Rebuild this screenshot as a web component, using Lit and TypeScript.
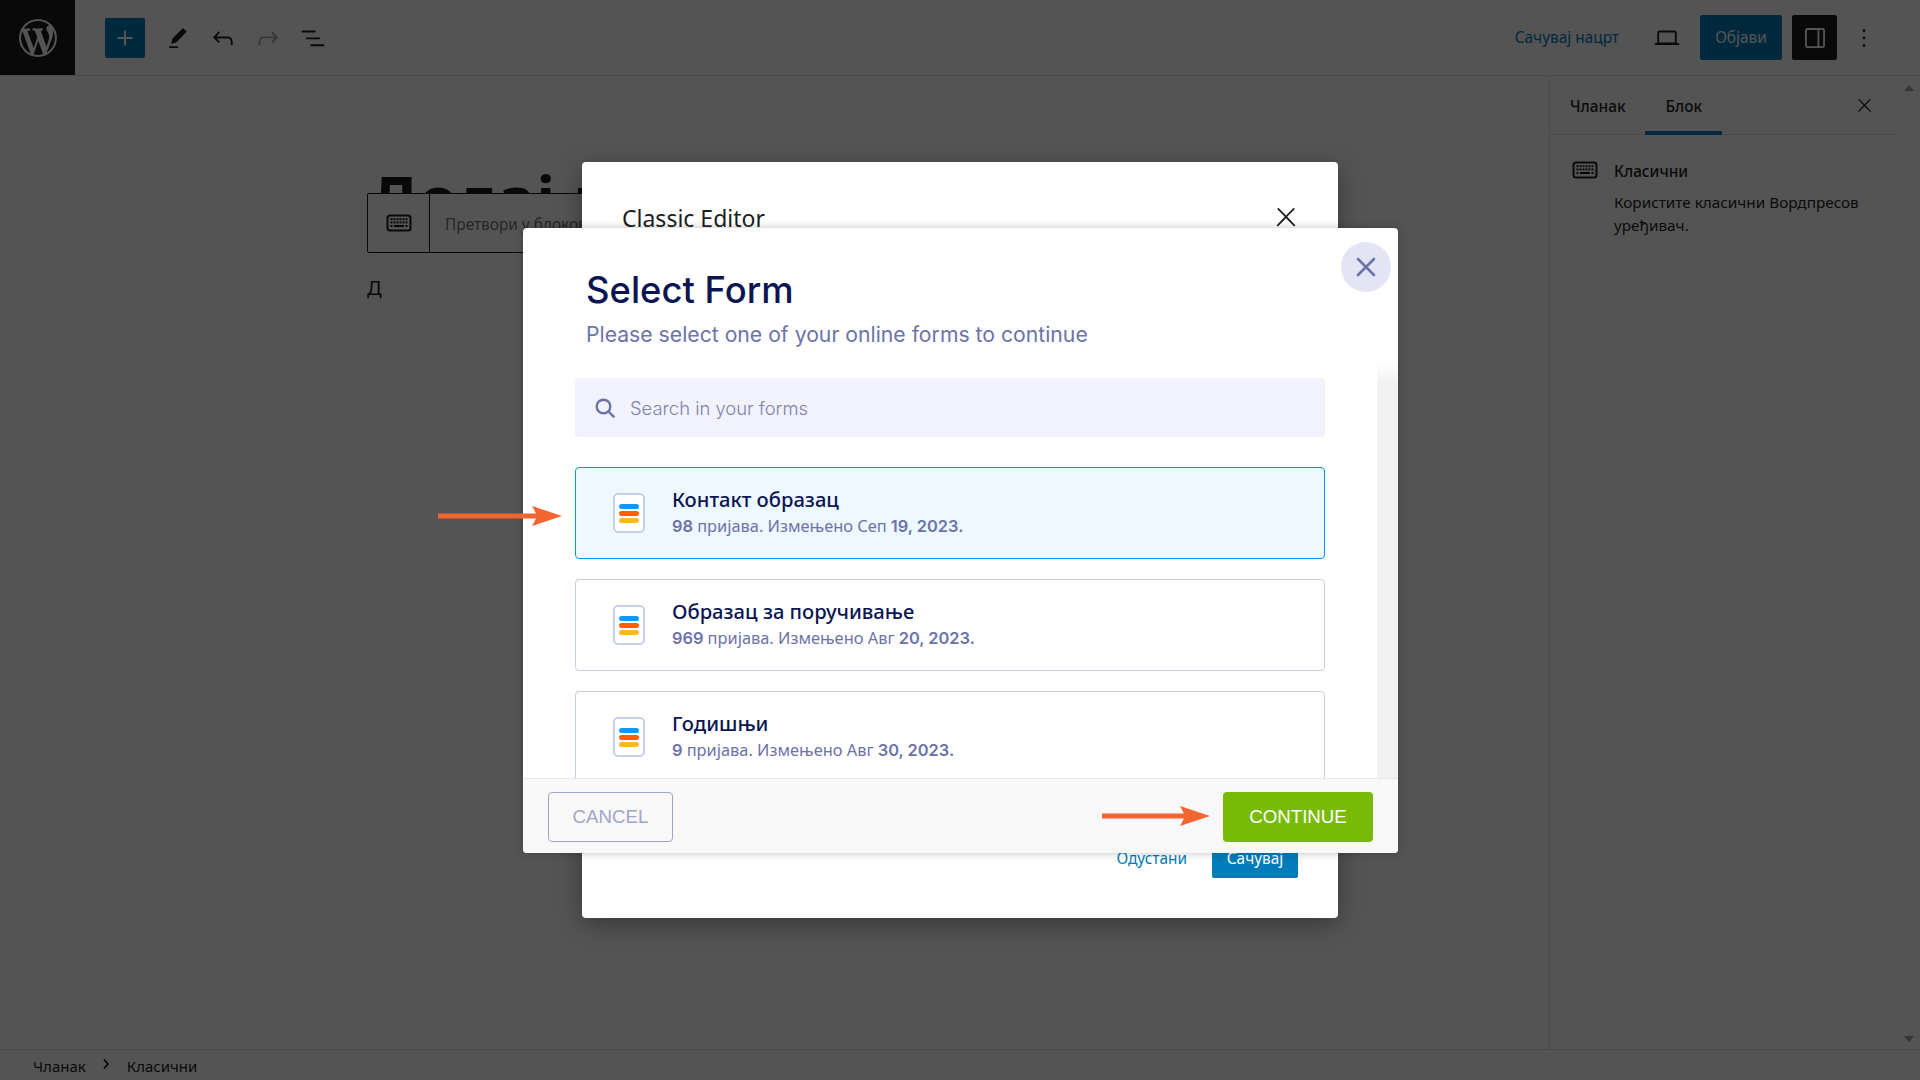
import { LitElement, html, css, svg } from 'lit';
import { customElement } from 'lit/decorators.js';

const icon = (d: string, size = 30) => html`
  <svg width=${size} height=${size} viewBox="0 0 24 24" fill="currentColor">${svg`<path d=${d}></path>`}</svg>
`;

const wpLogo =
  'M20 10c0-5.51-4.49-10-10-10C4.48 0 0 4.49 0 10c0 5.52 4.48 10 10 10 5.51 0 10-4.48 10-10zM7.78 15.37L4.37 6.22c.55-.02 1.17-.08 1.17-.08.5-.06.44-1.13-.06-1.11 0 0-1.45.11-2.37.11-.18 0-.37 0-.58-.01C4.12 2.69 6.87 1.11 10 1.11c2.33 0 4.45.87 6.05 2.34-.68-.11-1.65.39-1.65 1.58 0 .74.45 1.36.9 2.1.35.61.55 1.36.55 2.46 0 1.49-1.4 5-1.4 5l-3.03-8.37c.54-.02.82-.17.82-.17.5-.05.44-1.25-.06-1.22 0 0-1.44.12-2.38.12-.87 0-2.33-.12-2.33-.12-.5-.03-.56 1.2-.06 1.22l.92.08 1.26 3.41zM17.41 10c.24-.64.74-1.87.43-4.25.7 1.29 1.05 2.71 1.05 4.25 0 3.29-1.73 6.24-4.4 7.78.97-2.59 1.94-5.2 2.92-7.78zM6.1 18.09C3.12 16.65 1.11 13.53 1.11 10c0-1.3.23-2.48.72-3.59C3.25 10.3 4.67 14.2 6.1 18.09zm4.03-6.63l2.58 6.98c-.86.29-1.76.45-2.71.45-.79 0-1.57-.11-2.29-.33.81-2.38 1.62-4.74 2.42-7.1z';
const plus = 'M18 11.2h-5.2V6h-1.6v5.2H6v1.6h5.2V18h1.6v-5.2H18z';
const pencil = 'm19 7-3-3-8.5 8.5-1 4 4-1L19 7Zm-7 11.5H5V20h7v-1.5Z';
const undo = 'M18.3 11.7c-.6-.6-1.4-.9-2.3-.9H6.7l2.9-3.3-1.1-1-4.5 5L8.5 16l1-1-2.7-2.7H16c.5 0 .9.2 1.3.5 1 1 1 3.4 1 4.5v.3h1.5v-.2c0-1.5 0-4.3-1.5-5.7z';
const redo = 'M15.6 6.5l-1.1 1 2.9 3.3H8c-.9 0-1.7.3-2.3.9-1.4 1.5-1.4 4.2-1.4 5.6v.2h1.5v-.3c0-1.1 0-3.5 1-4.5.3-.3.7-.5 1.3-.5h9.2L14.5 15l1.1 1.1 4.6-4.6-4.6-5z';
const listView = 'M3 6h11v1.5H3V6zm3.5 5.5h11V13h-11v-1.5zM21 17H10v1.5h11V17z';
const laptop = 'M20.5 16h-.7V8c0-1.1-.9-2-2-2H6.2c-1.1 0-2 .9-2 2v8h-.7c-.8 0-1.5.7-1.5 1.5h20c0-.8-.7-1.5-1.5-1.5zM5.7 8c0-.3.2-.5.5-.5h11.6c.3 0 .5.2.5.5v7.6H5.7V8z';
const sidebarIcon = 'M18 4H6c-1.1 0-2 .9-2 2v12c0 1.1.9 2 2 2h12c1.1 0 2-.9 2-2V6c0-1.1-.9-2-2-2zm-4 14.5H6c-.3 0-.5-.2-.5-.5V6c0-.3.2-.5.5-.5h8v13zm4.5-.5c0 .3-.2.5-.5.5h-2.5v-13H18c.3 0 .5.2.5.5v12z';
const kebab = 'M13 19h-2v-2h2v2zm0-6h-2v-2h2v2zm0-6h-2V5h2v2z';
const closeIcon = 'M13 11.8l6.1-6.3-1-1-6.1 6.2-6.1-6.2-1 1 6.1 6.3-6.5 6.7 1 1 6.5-6.6 6.5 6.6 1-1z';
const chevron = 'M10.4 6 8.8 7.2l4.2 4.8-4.2 4.8 1.6 1.2 5.3-6z';

// six keys, six keys, then key + space bar + key
const keyboardIcon = html`
  <svg width="30" height="30" viewBox="0 0 30 30" fill="currentColor">
    <rect x="3.5" y="7.5" width="23" height="15" rx="2.5" fill="none" stroke="currentColor" stroke-width="2"></rect>
    ${[6.5, 9.5, 12.5, 15.5, 18.5, 21.5].map(
      (x) => svg`<rect x=${x} y="10.2" width="2" height="2"></rect><rect x=${x} y="13.4" width="2" height="2"></rect>`
    )}
    <rect x="6.5" y="17" width="2" height="2"></rect>
    <rect x="10" y="17" width="10" height="2"></rect>
    <rect x="21.5" y="17" width="2" height="2"></rect>
  </svg>
`;

const forms = [
  { name: 'Контакт образац', count: '98', month: 'Сеп', date: '19, 2023.', active: true },
  { name: 'Образац за поручивање', count: '969', month: 'Авг', date: '20, 2023.', active: false },
  { name: 'Годишњи', count: '9', month: 'Авг', date: '30, 2023.', active: false },
];

@customElement('app-root')
export class AppRoot extends LitElement {
  static styles = css`
    :host {
      display: block;
      position: relative;
      width: 1920px;
      height: 1080px;
      overflow: hidden;
      background: #fff;
      color: #1e1e1e;
      font-family: 'Noto Sans', sans-serif;
      font-size: 15.4px;
    }
    svg {
      display: block;
      flex: none;
    }

    /* editor behind the overlay */
    .editor {
      height: 100%;
      display: flex;
      flex-direction: column;
    }
    .topbar {
      height: 76px;
      flex: none;
      box-sizing: border-box;
      border-bottom: 1px solid #e0e0e0;
      display: flex;
      align-items: center;
    }
    .wp {
      width: 75px;
      height: 75px;
      background: #1e1e1e;
      color: #fff;
      display: flex;
      align-items: center;
      justify-content: center;
      flex: none;
    }
    .tools {
      display: flex;
      align-items: center;
      margin-left: 30px;
      gap: 15px;
    }
    .add {
      width: 40px;
      height: 40px;
      border-radius: 2px;
      background: #007cba;
      color: #fff;
      display: flex;
      align-items: center;
      justify-content: center;
      margin-right: 3px;
    }
    .muted {
      color: #a7a7a7;
    }
    .actions {
      margin-left: auto;
      display: flex;
      align-items: center;
      padding-right: 41px;
    }
    .save {
      color: #007cba;
      margin-right: 33px;
    }
    .publish {
      width: 82px;
      height: 45px;
      margin: 0 10px 0 18px;
      border-radius: 2px;
      background: #007cba;
      color: #fff;
      display: flex;
      align-items: center;
      justify-content: center;
    }
    .panel-btn {
      width: 45px;
      height: 45px;
      border-radius: 2px;
      background: #1e1e1e;
      color: #fff;
      display: flex;
      align-items: center;
      justify-content: center;
      margin-right: 12px;
    }
    .body {
      flex: 1;
      display: flex;
      min-height: 0;
    }
    .canvas {
      flex: 1;
      padding: 80px 0 0 367px;
      position: relative;
    }
    .heading {
      font-size: 62px;
      font-weight: 700;
      line-height: 84px;
      letter-spacing: 1px;
      margin-left: 3px;
      white-space: nowrap;
    }
    .block-toolbar {
      position: absolute;
      left: 367px;
      top: 117px;
      height: 60px;
      width: 300px;
      box-sizing: border-box;
      background: #fff;
      border: 1px solid #1e1e1e;
      border-radius: 2px;
      display: flex;
      align-items: center;
    }
    .block-toolbar .type {
      width: 62px;
      height: 100%;
      box-sizing: border-box;
      border-right: 1px solid #1e1e1e;
      display: flex;
      align-items: center;
      justify-content: center;
    }
    .block-toolbar .convert {
      padding: 3px 0 0 15px;
      white-space: nowrap;
      color: #757575;
    }
    .para {
      margin-top: 36px;
      font-size: 20px;
      line-height: 24px;
    }
    .sidebar {
      width: 350px;
      flex: none;
      box-sizing: border-box;
      border-left: 1px solid #e0e0e0;
    }
    .tabs {
      height: 59px;
      box-sizing: border-box;
      border-bottom: 1px solid #e0e0e0;
      display: flex;
      align-items: stretch;
      position: relative;
    }
    .tab {
      padding: 2px 20px 0;
      display: flex;
      align-items: center;
      font-weight: 500;
      margin-bottom: -1px;
    }
    .tab.on {
      box-shadow: inset 0 -4px 0 #007cba;
    }
    .tabs .x {
      margin-left: auto;
      margin-right: 24px;
      align-self: center;
    }
    .block-card {
      display: flex;
      gap: 14px;
      padding: 25px 20px 0 20px;
    }
    .block-card strong {
      display: block;
      font-weight: 500;
      line-height: 24px;
      margin-bottom: 7px;
    }
    .block-card p {
      margin: 0;
      line-height: 23px;
      font-size: 15.3px;
    }
    .block-card > svg {
      margin-top: -5px;
    }
    .rail {
      width: 21px;
      flex: none;
      position: relative;
    }
    .rail::before,
    .rail::after {
      content: '';
      position: absolute;
      left: 5px;
      border-left: 5px solid transparent;
      border-right: 5px solid transparent;
    }
    .rail::before {
      top: 9px;
      border-bottom: 6px solid #a3a3a3;
    }
    .rail::after {
      bottom: 7px;
      border-top: 6px solid #a3a3a3;
    }
    .crumbs {
      height: 31px;
      flex: none;
      box-sizing: border-box;
      border-top: 1px solid #e0e0e0;
      display: flex;
      align-items: center;
      padding: 2px 0 0 33px;
      font-size: 15px;
    }
    .crumbs svg {
      margin: -4px 11px 0 10px;
    }

    .overlay {
      position: absolute;
      inset: 0;
      background: rgba(0, 0, 0, 0.67);
    }

    /* Classic Editor modal */
    .classic {
      position: absolute;
      left: 582px;
      top: 162px;
      width: 756px;
      height: 756px;
      box-sizing: border-box;
      padding: 40px;
      background: #fff;
      border-radius: 4px;
      box-shadow: 0 6px 24px rgba(0, 0, 0, 0.35);
      display: flex;
      flex-direction: column;
    }
    .classic-head {
      display: flex;
      align-items: center;
      justify-content: space-between;
      color: #1e1e1e;
    }
    .classic-head h2 {
      margin: 0;
      font-size: 23px;
      font-weight: 400;
      line-height: 32px;
    }
    .classic-head svg {
      margin: -2px -3px 0 0;
    }
    .classic-foot {
      margin-top: auto;
      display: flex;
      justify-content: flex-end;
      align-items: center;
      gap: 25px;
    }
    .classic-foot .cancel-link {
      color: #007cba;
    }
    .classic-foot .save-btn {
      width: 86px;
      height: 40px;
      border-radius: 2px;
      background: #007cba;
      color: #fff;
      display: flex;
      align-items: center;
      justify-content: center;
    }

    /* Select Form modal */
    .picker {
      position: absolute;
      left: 523px;
      top: 228px;
      width: 875px;
      height: 625px;
      isolation: isolate;
      background: #fff;
      border-radius: 4px;
      box-shadow: 0 0 8px rgba(0, 0, 0, 0.25);
      display: flex;
      flex-direction: column;
      overflow: hidden;
      font-family: Inter, sans-serif;
    }
    .picker-head {
      height: 135px;
      flex: none;
      box-sizing: border-box;
      padding: 40px 62px 0 63px;
    }
    .picker-head h1 {
      margin: 0;
      font-size: 36.4px;
      line-height: 44px;
      font-weight: 500;
      color: #0a1551;
    }
    .picker-head p {
      margin: 6px 0 0;
      font-size: 21.2px;
      line-height: 32px;
      color: #6c73a8;
    }
    .round-close {
      position: absolute;
      right: 7px;
      top: 14px;
      width: 50px;
      height: 50px;
      border-radius: 50%;
      background: #e3e5f5;
      color: #6c73a8;
      display: flex;
      align-items: center;
      justify-content: center;
    }
    .picker-body {
      flex: 1;
      min-height: 0;
      display: flex;
      position: relative;
    }
    .picker-body::before {
      content: '';
      position: absolute;
      left: 0;
      right: 0;
      top: 0;
      height: 22px;
      background: linear-gradient(#fff, rgba(255, 255, 255, 0));
      z-index: 1;
    }
    .list {
      flex: 1;
      overflow: hidden;
      padding: 15px 52px 0 52px;
    }
    .track {
      width: 21px;
      flex: none;
      background: #f1f1f1;
    }
    .search {
      height: 59px;
      border-radius: 4px;
      background: #f1f2fc;
      display: flex;
      align-items: center;
      padding-left: 20px;
      gap: 15px;
      color: #6c73a8;
      font-size: 18.4px;
      margin-bottom: 30px;
    }
    .search span {
      color: #7e83ad;
      font-weight: 300;
      padding-top: 1px;
    }
    .form {
      height: 92px;
      box-sizing: border-box;
      border: 1px solid #c8ceed;
      border-radius: 4px;
      margin-bottom: 20px;
      display: flex;
      align-items: center;
      padding-left: 37px;
      gap: 27px;
      background: #fff;
    }
    .form.active {
      background: #edf8ff;
      border-color: #0099ff;
    }
    .doc {
      width: 32px;
      height: 40px;
      flex: none;
      box-sizing: border-box;
      background: #fff;
      border: 2px solid #c3cfec;
      border-radius: 5px;
      display: flex;
      flex-direction: column;
      justify-content: center;
      align-items: center;
      gap: 2px;
    }
    .doc i {
      display: block;
      width: 20px;
      height: 5px;
      border-radius: 3px;
    }
    .form-name {
      font-family: 'Noto Sans', sans-serif;
      font-size: 20.2px;
      line-height: 26px;
      font-weight: 500;
      color: #0a1551;
      margin-top: -3px;
    }
    .form-meta {
      font-size: 16.4px;
      line-height: 24px;
      color: #6c73a8;
      font-weight: 600;
      margin-top: 2px;
    }
    .form-meta span {
      font-family: 'Noto Sans', sans-serif;
      font-weight: 400;
    }
    .picker-foot {
      height: 75px;
      flex: none;
      box-sizing: border-box;
      border-top: 1px solid #e5e7f5;
      background: #f8f8f9;
      position: relative;
      z-index: 2;
      display: flex;
      align-items: center;
      justify-content: space-between;
      padding: 1px 25px 0;
      font-family: 'Liberation Sans', sans-serif;
      font-size: 18.7px;
    }
    .btn {
      height: 50px;
      box-sizing: border-box;
      border-radius: 4px;
      display: flex;
      align-items: center;
      justify-content: center;
    }
    .btn.cancel {
      width: 125px;
      border: 1px solid #a0a6c9;
      color: #a0a6c9;
    }
    .btn.go {
      width: 150px;
      background: #78bb07;
      color: #fff;
    }

    .arrow {
      position: absolute;
      display: block;
    }
  `;

  private arrow(left: number, top: number, width: number) {
    const w = width;
    return html`<svg class="arrow" style="left:${left}px;top:${top}px" width=${w} height="20" viewBox="0 0 ${w} 20">
      <path fill="#f26531" d="M0 7.5H${w - 26}L${w - 30} 0 ${w} 10 ${w - 30} 20 ${w - 26} 12.5H0Z"></path>
    </svg>`;
  }

  render() {
    return html`
      <div class="editor">
        <header class="topbar">
          <div class="wp">
            <svg width="38" height="38" viewBox="0 0 20 20" fill="currentColor"><path d=${wpLogo}></path></svg>
          </div>
          <div class="tools">
            <div class="add">${icon(plus)}</div>
            ${icon(pencil)} ${icon(undo)} <span class="muted">${icon(redo)}</span> ${icon(listView)}
          </div>
          <div class="actions">
            <span class="save">Сачувај нацрт</span>
            ${icon(laptop)}
            <div class="publish">Објави</div>
            <div class="panel-btn">${icon(sidebarIcon)}</div>
            ${icon(kebab)}
          </div>
        </header>
        <div class="body">
          <main class="canvas">
            <div class="heading">Додај наслов</div>
            <div class="block-toolbar">
              <div class="type">${keyboardIcon}</div>
              <div class="convert">Претвори у блокове</div>
            </div>
            <div class="para">Д</div>
          </main>
          <aside class="sidebar">
            <div class="tabs">
              <div class="tab">Чланак</div>
              <div class="tab on">Блок</div>
              <div class="x">${icon(closeIcon, 21)}</div>
            </div>
            <div class="block-card">
              ${keyboardIcon}
              <div>
                <strong>Класични</strong>
                <p>Користите класични Вордпресов уређивач.</p>
              </div>
            </div>
          </aside>
          <div class="rail"></div>
        </div>
        <footer class="crumbs">
          <span>Чланак</span>
          ${icon(chevron, 20)}
          <span>Класични</span>
        </footer>
      </div>

      <div class="overlay"></div>

      <section class="classic">
        <div class="classic-head">
          <h2>Classic Editor</h2>
          ${icon(closeIcon, 30)}
        </div>
        <div class="classic-foot">
          <span class="cancel-link">Одустани</span>
          <div class="save-btn">Сачувај</div>
        </div>
      </section>

      <section class="picker">
        <div class="picker-head">
          <h1>Select Form</h1>
          <p>Please select one of your online forms to continue</p>
        </div>
        <div class="round-close">
          <svg width="20" height="20" viewBox="0 0 20 20" fill="none" stroke="currentColor" stroke-width="2.6" stroke-linecap="round">
            <path d="M2 2 18 18M18 2 2 18"></path>
          </svg>
        </div>
        <div class="picker-body">
          <div class="list">
            <div class="search">
              <svg width="20" height="20" viewBox="0 0 20 20" fill="none" stroke="currentColor" stroke-width="2.4" stroke-linecap="round">
                <circle cx="8.5" cy="8.5" r="6.8"></circle>
                <path d="M13.6 13.6 18.6 18.6"></path>
              </svg>
              <span>Search in your forms</span>
            </div>
            ${forms.map(
              (f) => html`
                <div class="form ${f.active ? 'active' : ''}">
                  <div class="doc">
                    <i style="background:#0a9aff"></i>
                    <i style="background:#ff6100"></i>
                    <i style="background:#ffb629"></i>
                  </div>
                  <div>
                    <div class="form-name">${f.name}</div>
                    <div class="form-meta">${f.count} <span>пријава. Измењено ${f.month}</span> ${f.date}</div>
                  </div>
                </div>
              `
            )}
          </div>
          <div class="track"></div>
        </div>
        <div class="picker-foot">
          <div class="btn cancel">CANCEL</div>
          <div class="btn go">CONTINUE</div>
        </div>
      </section>

      ${this.arrow(438, 506, 124)} ${this.arrow(1102, 806, 108)}
    `;
  }
}
